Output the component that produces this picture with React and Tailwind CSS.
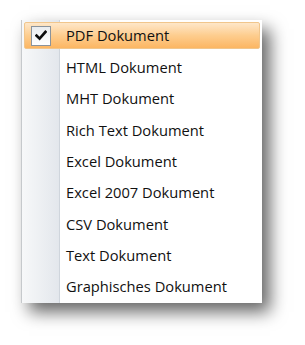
const items = [
  'PDF Dokument',
  'HTML Dokument',
  'MHT Dokument',
  'Rich Text Dokument',
  'Excel Dokument',
  'Excel 2007 Dokument',
  'CSV Dokument',
  'Text Dokument',
  'Graphisches Dokument',
]

const CheckBox = () => (
  <span className="flex h-[20px] w-[20px] items-center justify-center border border-[#8a939c] bg-gradient-to-b from-[#e9ecef] to-white">
    <svg width="12" height="11" viewBox="0 0 12 11">
      <path d="M1.6 5.6 L4.6 8.6 L10.4 2" fill="none" stroke="#0d0d0d" strokeWidth="2.7" strokeLinecap="square" />
    </svg>
  </span>
)

export default function App() {
  return (
    <div className="h-[345px] w-[305px] bg-white pl-[21px] pt-[20px] font-['Open_Sans',sans-serif]">
      <div className="w-[241px] border-l border-[#c6c9cc] bg-[linear-gradient(to_right,#f7f8f9_0px,#e3e7ec_37px,#cfd5dc_37px,#cfd5dc_38px,#ffffff_38px)] shadow-[8px_9px_16px_rgba(0,0,0,0.6)]">
        {items.map((label, i) =>
          i === 0 ? (
            <div key={label} className="flex h-[31.4px] items-stretch px-[2px] py-[2px]">
              <div className="flex flex-1 items-center rounded-[2px] border border-[#f1c68c] bg-gradient-to-b from-[#fee7c9] via-[#fdcd8e] to-[#fcb662] pl-[6px]">
                <CheckBox />
                <span className="ml-[15px] text-[14.7px] leading-none text-[#111]">{label}</span>
              </div>
            </div>
          ) : (
            <div key={label} className="flex h-[31.4px] items-center pl-[44px] text-[14.7px] leading-none text-[#111]">
              {label}
            </div>
          )
        )}
      </div>
    </div>
  )
}
